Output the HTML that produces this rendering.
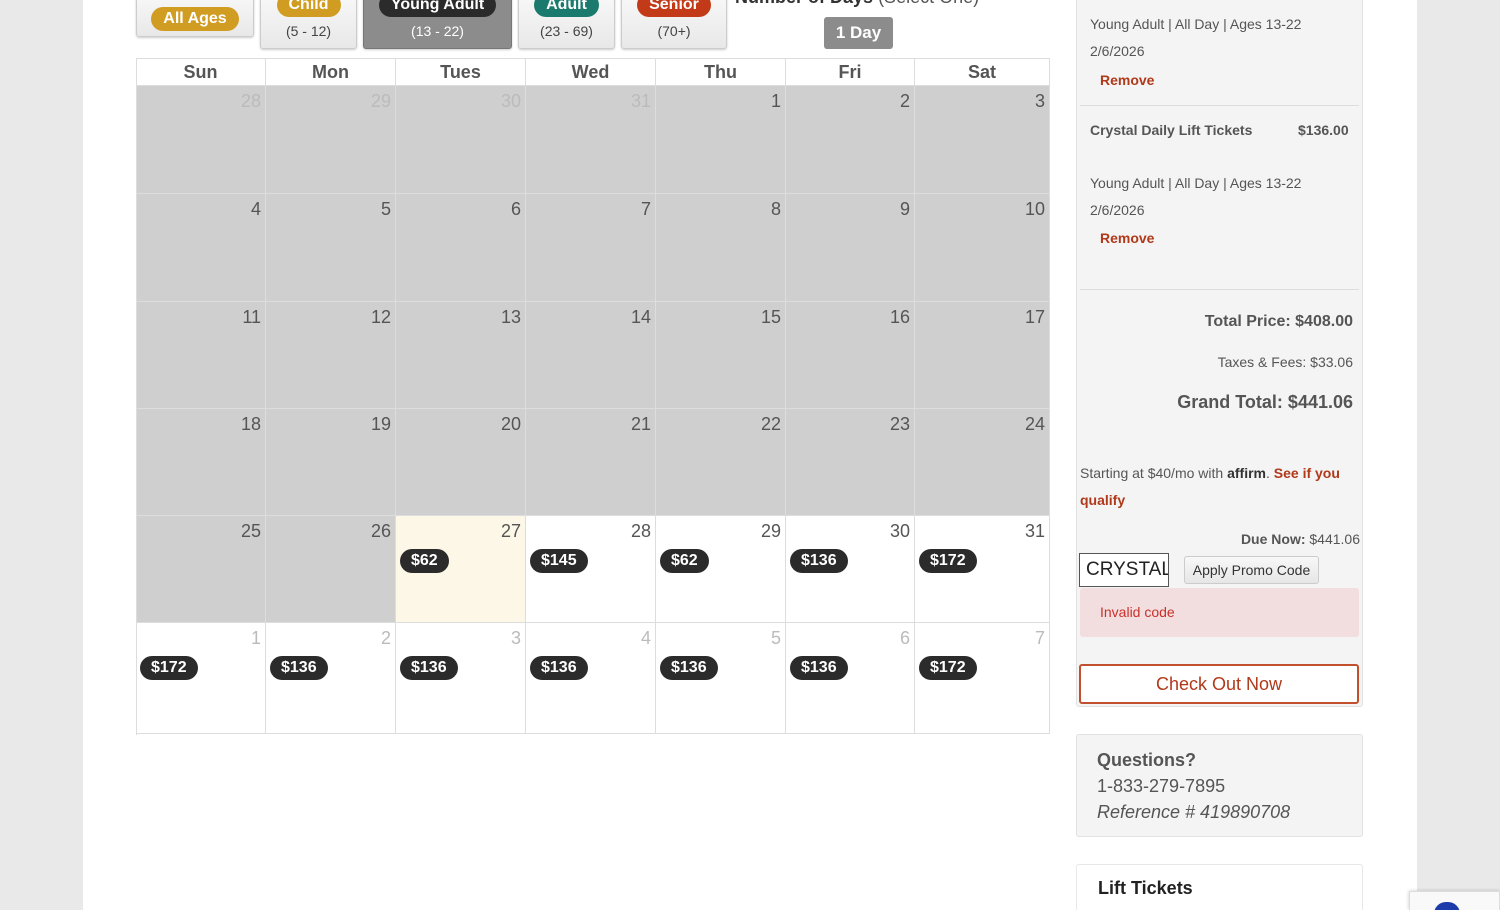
<!DOCTYPE html>
<html><head><meta charset="utf-8"><style>
*{box-sizing:border-box;margin:0;padding:0}
html{width:1500px;height:910px;overflow:hidden}
body{width:1500px;height:910px;overflow:hidden;background:#e9e9e9;font-family:"Liberation Sans",Arial,sans-serif;position:relative;color:#444}
.main{position:absolute;left:83px;top:0;width:1334px;height:910px;background:#fff}
.a{position:absolute}
.btn{position:absolute;top:-6px;height:55px;background:linear-gradient(#f8f8f8,#e8e8e8);border:1px solid #ccc;border-radius:3px;box-shadow:0 1px 2px rgba(0,0,0,.2);text-align:center;font-size:14px;color:#444}
.pill{display:inline-block;color:#fff;font-weight:bold;font-size:16px;border-radius:12px;padding:3px 12px;line-height:18px}
.cell{position:absolute;border-right:1px solid #ddd;border-bottom:1px solid #ddd}
.g{background:#cfcfcf}
.w{background:#fff}
.n{position:absolute;right:4px;top:5px;font-size:18px;color:#555}
.f{color:#bbb}
.p{position:absolute;left:4px;top:33px;background:#2b2b2b;color:#fff;font-weight:bold;font-size:16px;border-radius:12px;padding:3px 11px;line-height:18px}
.hd{position:absolute;top:58px;height:28px;background:#fff;border-right:1px solid #ddd;border-bottom:1px solid #ddd;border-top:1px solid #ddd;text-align:center;font-weight:bold;font-size:18px;line-height:27px;color:#555}
.sb{font-size:14px;color:#555}
.rm{color:#b0391a;font-weight:bold;font-size:14px}
</style></head><body>
<div class="main"></div>
<div class="btn" style="left:136px;width:118px;height:43px;padding-top:12px"><span class="pill" style="background:#d19c22">All Ages</span></div>
<div class="btn" style="left:260px;width:97px"><span class="pill" style="background:#d19c22;margin-top:-2px">Child</span><div style="margin-top:6px">(5 - 12)</div></div>
<div class="btn" style="left:363px;width:149px;background:#8c8c8c;color:#fff;border-color:#777"><span class="pill" style="background:#2b2b2b;margin-top:-2px">Young Adult</span><div style="margin-top:6px">(13 - 22)</div></div>
<div class="btn" style="left:518px;width:97px"><span class="pill" style="background:#1a7a6e;margin-top:-2px">Adult</span><div style="margin-top:6px">(23 - 69)</div></div>
<div class="btn" style="left:621px;width:106px"><span class="pill" style="background:#c23a18;margin-top:-2px">Senior</span><div style="margin-top:6px">(70+)</div></div>
<div class="a" style="left:735px;top:-13px;font-size:18px;color:#333"><b>Number of Days</b> <span style="color:#555">(Select One)</span></div>
<div class="a" style="left:824px;top:17px;width:69px;height:32px;background:#8c8c8c;border-radius:3px;color:#fff;font-size:17px;font-weight:bold;text-align:center;line-height:32px">1 Day</div>
<div id="cal"></div>
<div class="a" style="left:136px;top:58px;width:1px;height:677px;background:#ddd"></div>
<div class="a" style="left:1076px;top:-5px;width:287px;height:712px;background:#f4f4f4;border:1px solid #e2e2e2;border-radius:3px"></div>
<div class="a sb" style="left:1090px;top:16px">Young Adult | All Day | Ages 13-22</div>
<div class="a sb" style="left:1090px;top:43px">2/6/2026</div>
<div class="a rm" style="left:1100px;top:72px">Remove</div>
<div class="a" style="left:1080px;top:105px;width:279px;height:1px;background:#ddd"></div>
<div class="a sb" style="left:1090px;top:122px;font-weight:bold">Crystal Daily Lift Tickets</div>
<div class="a sb" style="left:1298px;top:122px;font-weight:bold">$136.00</div>
<div class="a sb" style="left:1090px;top:175px">Young Adult | All Day | Ages 13-22</div>
<div class="a sb" style="left:1090px;top:202px">2/6/2026</div>
<div class="a rm" style="left:1100px;top:230px">Remove</div>
<div class="a" style="left:1080px;top:289px;width:279px;height:1px;background:#ddd"></div>
<div class="a" style="right:147px;top:313px;font-size:16px;font-weight:bold;color:#555">Total Price: $408.00</div>
<div class="a" style="right:147px;top:354px;font-size:14px;color:#555">Taxes &amp; Fees: $33.06</div>
<div class="a" style="right:147px;top:392px;font-size:18px;font-weight:bold;color:#555">Grand Total: $441.06</div>
<div class="a" style="left:1080px;top:460px;font-size:14px;color:#555;width:280px;line-height:27px">Starting at $40/mo with <b style="color:#333">affirm</b>. <b style="color:#b0391a">See if you qualify</b></div>
<div class="a" style="right:140px;top:531px;font-size:14px;color:#555"><b>Due Now:</b> $441.06</div>
<div class="a" style="left:1079px;top:553px;width:90px;height:34px;background:#fff;border:1px solid #555;font-size:19px;color:#222;padding:5px 6px;overflow:hidden;white-space:nowrap">CRYSTAL</div>
<div class="a" style="left:1184px;top:556px;width:135px;height:28px;background:linear-gradient(#f8f8f8,#e6e6e6);border:1px solid #ccc;border-radius:3px;font-size:14px;text-align:center;line-height:27px;color:#333">Apply Promo Code</div>
<div class="a" style="left:1080px;top:588px;width:279px;height:49px;background:#f2dede;border-radius:3px;color:#c9302c;font-size:14px;padding:16px 20px">Invalid code</div>
<div class="a" style="left:1079px;top:664px;width:280px;height:40px;border:2px solid #c0502e;border-radius:3px;background:#fff;color:#b0391a;font-size:18px;text-align:center;line-height:36px">Check Out Now</div>
<div class="a" style="left:1076px;top:734px;width:287px;height:103px;background:#f4f4f4;border:1px solid #e2e2e2;border-radius:3px;padding:12px 20px;font-size:18px;line-height:26px;color:#555"><b>Questions?</b><br>1-833-279-7895<br><i>Reference # 419890708</i></div>
<div class="a" style="left:1076px;top:864px;width:287px;height:46px;background:#fff;border:1px solid #e8e8e8;border-bottom:none;border-radius:3px 3px 0 0;padding:13px 21px;font-size:18px;font-weight:bold;color:#222">Lift Tickets</div>
<div class="a" style="left:1409px;top:891px;width:91px;height:19px;background:#f9f9f9;border:1px solid #ddd;border-bottom:none;box-shadow:0 0 4px rgba(0,0,0,.2);overflow:hidden"><div style="position:absolute;left:24px;top:10px;width:26px;height:20px;background:#1c3aa9;border-radius:12px 12px 0 0"></div></div>
<script>
const xs=[136,266,396,526,656,786,915,1050];
const ys=[86,194,302,409,516,623,734];
const days=["Sun","Mon","Tues","Wed","Thu","Fri","Sat"];
let h="";
for(let c=0;c<7;c++)h+=`<div class="hd" style="left:${xs[c]}px;width:${xs[c+1]-xs[c]}px">${days[c]}</div>`;
const nums=[[28,29,30,31,1,2,3],[4,5,6,7,8,9,10],[11,12,13,14,15,16,17],[18,19,20,21,22,23,24],[25,26,27,28,29,30,31],[1,2,3,4,5,6,7]];
const pr={"4-2":"$62","4-3":"$145","4-4":"$62","4-5":"$136","4-6":"$172","5-0":"$172","5-1":"$136","5-2":"$136","5-3":"$136","5-4":"$136","5-5":"$136","5-6":"$172"};
for(let r=0;r<6;r++)for(let c=0;c<7;c++){
 let bg=(r<4||(r==4&&c<2))?"g":"w";
 let st=(r==4&&c==2)?"background:#fcf7e6;":"";
 let faded=(r==0&&c<4)||r==5;
 let p=pr[r+"-"+c];
 h+=`<div class="cell ${bg}" style="${st}left:${xs[c]}px;top:${ys[r]}px;width:${xs[c+1]-xs[c]}px;height:${ys[r+1]-ys[r]}px"><span class="n ${faded?'f':''}">${nums[r][c]}</span>${p?`<span class="p">${p}</span>`:""}</div>`;
}
document.getElementById("cal").innerHTML=h;
</script>
</body></html>
